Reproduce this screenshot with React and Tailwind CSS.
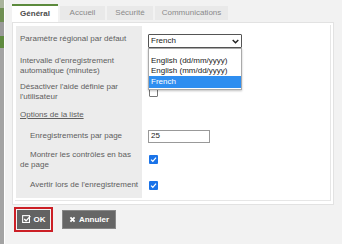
import React from 'react';

const font = { fontFamily: '"Liberation Sans", Arial, sans-serif' };

function Check({ checked }) {
  if (!checked) {
    return <span className="block w-[9px] h-[9px] border border-[#777] bg-white rounded-[1px]" />;
  }
  return (
    <span className="flex items-center justify-center w-[9px] h-[9px] bg-[#1a73e8] rounded-[1px]">
      <svg width="7" height="7" viewBox="0 0 10 10">
        <path d="M1.5 5.2 L4 7.6 L8.6 2.4" stroke="white" strokeWidth="1.8" fill="none" />
      </svg>
    </span>
  );
}

function Row({ label, h, children, indent, nowrap }) {
  return (
    <div className="flex" style={{ height: h }}>
      <div className="w-[126px] bg-[#ececec] pl-[4px] pr-[2px] flex items-center leading-[10px] text-[#5e5e5e]">
        <span className={`${indent ? 'indent-[10px]' : ''} ${nowrap ? 'whitespace-nowrap' : ''}`}>{label}</span>
      </div>
      <div className="flex-1 flex items-center pl-[6px]">{children}</div>
    </div>
  );
}

export default function App() {
  return (
    <div className="w-[342px] h-[244px] bg-[#f2f2f2] flex overflow-hidden text-[8px]" style={font}>
      {/* window behind */}
      <div className="w-[4px] flex flex-col">
        <div className="h-[8px] bg-[#a9b39b]" />
        <div className="h-[14px] bg-[#6f8f52]" />
        <div className="h-[14px] bg-[#9a9a9a]" />
        <div className="h-[12px] bg-[#5f8a3f]" />
        <div className="flex-1 bg-[#a3a3a3]" />
      </div>
      <div className="w-[1px] bg-white" />

      <div className="flex-1 flex flex-col pl-[7px] pr-[8px] pt-[4px]">
        {/* tabs */}
        <div className="flex items-end gap-[2px] h-[18px]">
          <div className="w-[46px] h-[18px] bg-white border-t-2 border-[#5c8a3c] flex items-center justify-center font-bold text-[#4a4a4a]">Général</div>
          <div className="w-[45px] h-[14px] bg-[#e9e9e9] flex items-center justify-center text-[#8a8a8a] mb-[2px]">Accueil</div>
          <div className="w-[46px] h-[14px] bg-[#e9e9e9] flex items-center justify-center text-[#8a8a8a] mb-[2px]">Sécurité</div>
          <div className="w-[73px] h-[14px] bg-[#e9e9e9] flex items-center justify-center text-[#8a8a8a] mb-[2px]">Communications</div>
        </div>

        {/* panel */}
        <div className="w-[322px] bg-white border border-[#e2e2e2] p-[2px] pb-[3px]">
          <div className="border-r border-b border-[#e6e6e6] pl-[1px] pt-[1px] pb-[2px] relative">
            <Row label="Paramètre régional par défaut" h={26}>
              <div className="relative self-start mt-[8px]">
                <div className="w-[94px] h-[14px] border border-[#555] rounded-[1px] flex items-center justify-between px-[2px] text-[#222] bg-white">
                  <span>French</span>
                  <svg width="7" height="5" viewBox="0 0 10 7">
                    <path d="M1 1.2 L5 5.2 L9 1.2" stroke="#222" strokeWidth="2" fill="none" />
                  </svg>
                </div>
                <div className="absolute left-0 top-[14px] w-[94px] h-[42px] bg-white border border-[#aaa] shadow-[0_1px_2px_rgba(0,0,0,0.25)] z-10 flex flex-col pt-[7px] text-[#222]">
                  <div className="h-[10px] leading-[10px] px-[2px]">English (dd/mm/yyyy)</div>
                  <div className="h-[10px] leading-[10px] px-[2px]">English (mm/dd/yyyy)</div>
                  <div className="h-[12px] leading-[12px] px-[2px] bg-[#2e8ef0] text-white">French</div>
                </div>
              </div>
            </Row>
            <Row label="Intervalle d'enregistrement automatique (minutes)" h={27} />
            <Row label="Désactiver l'aide définie par l'utilisateur" h={26}>
              <div className="pl-[1px]"><Check /></div>
            </Row>
            <Row label={<span className="underline">Options de la liste</span>} h={20} />
            <Row label="Enregistrements par page" h={22} indent>
              <div className="w-[62px] h-[13px] border border-[#999] flex items-center px-[2px] text-[#222]">25</div>
            </Row>
            <Row label="Montrer les contrôles en bas de page" h={25} indent>
              <div className="pl-[1px]"><Check checked /></div>
            </Row>
            <Row label="Avertir lors de l'enregistrement" h={26} indent nowrap>
              <div className="pl-[1px]"><Check checked /></div>
            </Row>
          </div>
        </div>

        {/* buttons */}
        <div className="flex items-center gap-[9px] mt-[2px] ml-[2px]">
          <div className="border-2 border-[#cc1f26] p-[1px]">
            <button className="w-[33px] h-[19px] bg-[#626262] text-white font-bold flex items-center justify-center gap-[3px]">
              <svg width="9" height="9" viewBox="0 0 10 10">
                <rect x="0.7" y="0.7" width="7.6" height="7.6" fill="none" stroke="white" strokeWidth="1.2" />
                <path d="M2.5 4.5 L4.5 6.5 L9.3 1.2" stroke="white" strokeWidth="1.5" fill="none" />
              </svg>
              OK
            </button>
          </div>
          <button className="w-[54px] h-[19px] bg-[#666] border border-[#888] text-white font-bold flex items-center justify-center gap-[3px]">
            <svg width="7" height="7" viewBox="0 0 10 10">
              <path d="M2 2 L8 8 M8 2 L2 8" stroke="white" strokeWidth="2.6" />
            </svg>
            Annuler
          </button>
        </div>
      </div>
    </div>
  );
}
